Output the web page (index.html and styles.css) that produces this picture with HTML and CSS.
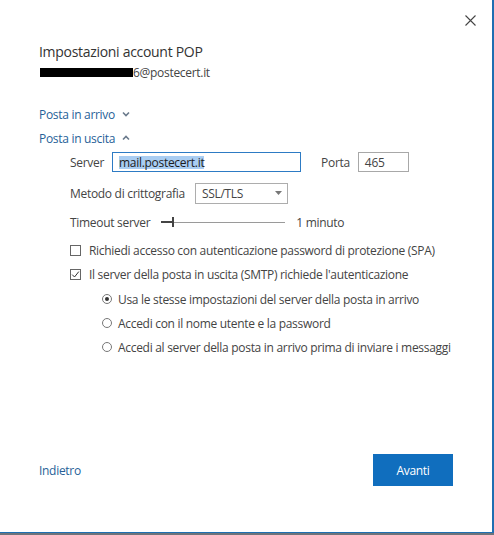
FILE: index.html
```html
<!DOCTYPE html>
<html>
<head>
    <meta charset="utf-8" />
    <title>Impostazioni account POP</title>
    <link rel="stylesheet" href="styles.css">
</head>
<body>
    <div class="finestra">
        <div class="chiudi">
            <svg width="11" height="11" viewBox="0 0 11 11"><path d="M0.5 0.5 L10.5 10.5 M10.5 0.5 L0.5 10.5" stroke="#444" stroke-width="1.1" fill="none" /></svg>
        </div>

        <div class="contenuto">
            <h1 class="titolo">Impostazioni account POP</h1>
            <div class="email"><span class="oscurato"></span>6@postecert.it</div>

            <div class="sezione arrivo">Posta in arrivo
                <svg class="freccia" width="8" height="6" viewBox="0 0 8 6"><path d="M1 1.5 L4 4.5 L7 1.5" stroke="#6a7a8c" stroke-width="1.6" fill="none" /></svg>
            </div>
            <div class="sezione">Posta in uscita
                <svg class="freccia" width="8" height="6" viewBox="0 0 8 6"><path d="M1 4.5 L4 1.5 L7 4.5" stroke="#6a7a8c" stroke-width="1.6" fill="none" /></svg>
            </div>

            <div class="impostazioni">
                <div class="riga">
                    <span class="etichetta">Server</span>
                    <div class="campo server"><span class="selezione">mail.postecert.it</span></div>
                    <span class="etichetta porta">Porta</span>
                    <div class="campo numero">465</div>
                </div>
                <div class="riga metodo">
                    <span class="etichetta">Metodo di crittografia</span>
                    <div class="tendina">
                        <span>SSL/TLS</span>
                        <svg width="7" height="4" viewBox="0 0 7 4"><path d="M0 0 L7 0 L3.5 4 Z" fill="#777" /></svg>
                    </div>
                </div>
                <div class="riga timeout">
                    <span class="etichetta">Timeout server</span>
                    <div class="cursore">
                        <div class="pieno"></div>
                        <div class="linea"></div>
                        <div class="pomello"></div>
                    </div>
                    <span class="etichetta minuto">1 minuto</span>
                </div>

                <div class="scelta spa">
                    <span class="casella"></span>
                    <span>Richiedi accesso con autenticazione password di protezione (SPA)</span>
                </div>
                <div class="scelta">
                    <span class="casella">
                        <svg width="9" height="9" viewBox="0 0 9 9"><path d="M1.2 4.6 L3.5 7 L7.8 1.6" stroke="#333" stroke-width="1" fill="none" /></svg>
                    </span>
                    <span>Il server della posta in uscita (SMTP) richiede l'autenticazione</span>
                </div>

                <div class="opzioni">
                    <div class="scelta">
                        <span class="tondo attivo"></span>
                        <span>Usa le stesse impostazioni del server della posta in arrivo</span>
                    </div>
                    <div class="scelta">
                        <span class="tondo"></span>
                        <span>Accedi con il nome utente e la password</span>
                    </div>
                    <div class="scelta">
                        <span class="tondo"></span>
                        <span>Accedi al server della posta in arrivo prima di inviare i messaggi</span>
                    </div>
                </div>
            </div>
        </div>

        <div class="piede">
            <a class="indietro">Indietro</a>
            <button class="avanti">Avanti</button>
        </div>
    </div>
</body>
</html>
```

FILE: styles.css
```css
* {
    box-sizing: border-box;
}

html, body {
    margin: 0;
    height: 100%;
}

body {
    font-family: 'Open Sans', 'Noto Sans', sans-serif;
    color: #3b3b3b;
    background-color: #6e737a;
    letter-spacing: -0.3px;
}

.finestra {
    height: 533px;
    display: flex;
    flex-direction: column;
    background-color: #fff;
    border-right: 2px solid #1f6fb2;
    border-bottom: 1px solid #1f6fb2;
    position: relative;
}

.chiudi {
    position: absolute;
    top: 9px;
    right: 16px;
}

.contenuto {
    padding: 42px 0 0 39px;
    flex: 1;
}

.titolo {
    margin: 0;
    font-size: 14px;
    line-height: 20px;
    font-weight: normal;
    color: #333;
}

.email {
    font-size: 12px;
    line-height: 16px;
    margin-top: 3px;
    color: #444;
}

.oscurato {
    display: inline-block;
    width: 93px;
    height: 9px;
    margin-left: 1px;
    background-color: #000;
    vertical-align: 0;
}

.sezione {
    font-size: 12px;
    color: #275f98;
    height: 24px;
    display: flex;
    align-items: center;
    gap: 7px;
}

.arrivo {
    margin-top: 21px;
}

.impostazioni {
    padding-left: 31px;
    font-size: 12px;
    color: #444;
}

.riga {
    display: flex;
    align-items: center;
    gap: 8px;
    height: 24px;
}

.metodo {
    margin-top: 7px;
    gap: 10px;
}

.timeout {
    margin-top: 5px;
}

.campo {
    height: 20px;
    border: 1px solid #a8a8a8;
    padding: 0 6px;
    display: flex;
    align-items: center;
}

.server {
    width: 189px;
    border-color: #2d7bc4;
}

.selezione {
    background-color: #a9cdf2;
    color: #1c1c1c;
    line-height: 13px;
}

.porta {
    margin-left: 12px;
}

.numero {
    width: 51px;
}

.tendina {
    width: 93px;
    height: 21px;
    border: 1px solid #adadad;
    display: flex;
    align-items: center;
    justify-content: space-between;
    padding: 0 5px 0 6px;
}

.cursore {
    width: 124px;
    height: 10px;
    margin-left: 3px;
    position: relative;
}

.pieno {
    position: absolute;
    left: 0;
    width: 11px;
    top: 4px;
    height: 2px;
    background-color: #444;
}

.linea {
    position: absolute;
    left: 11px;
    right: 0;
    top: 5px;
    border-top: 1px solid #9a9a9a;
}

.pomello {
    position: absolute;
    left: 11px;
    top: 0;
    width: 2px;
    height: 10px;
    background-color: #444;
}

.minuto {
    margin-left: 3px;
}

.scelta {
    display: flex;
    align-items: center;
    gap: 8px;
    height: 24px;
}

.spa {
    margin-top: 4px;
}

.casella {
    width: 11px;
    height: 11px;
    border: 1px solid #666;
    display: flex;
    align-items: center;
    justify-content: center;
}

.opzioni {
    padding-left: 32px;
    margin-top: 1px;
}

.opzioni .scelta {
    gap: 6px;
}

.tondo {
    width: 10px;
    height: 10px;
    border: 1px solid #777;
    border-radius: 50%;
    display: flex;
    align-items: center;
    justify-content: center;
}

.tondo.attivo::after {
    content: "";
    width: 4px;
    height: 4px;
    border-radius: 50%;
    background-color: #333;
}

.piede {
    display: flex;
    justify-content: space-between;
    align-items: center;
    padding: 0 39px 46px 39px;
}

.indietro {
    font-size: 12px;
    color: #275f98;
}

.avanti {
    width: 80px;
    height: 32px;
    background-color: #106ebe;
    border: none;
    color: #fff;
    font-family: 'Open Sans', 'Noto Sans', sans-serif;
    font-size: 12px;
    letter-spacing: -0.3px;
}
```
